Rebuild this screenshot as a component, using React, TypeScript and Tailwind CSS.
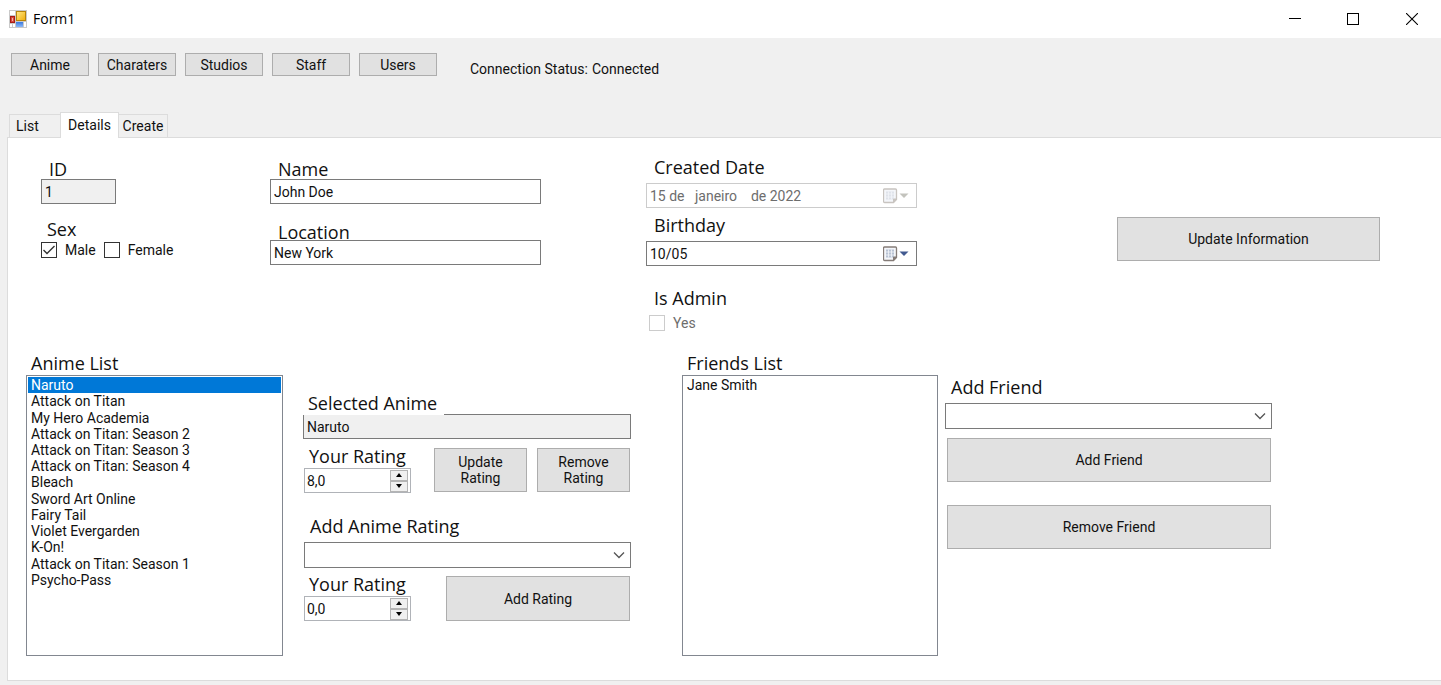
import { useId, useState, type ReactNode } from "react";

const sections = ["Anime", "Charaters", "Studios", "Staff", "Users"];

const animeTitles = [
  "Naruto",
  "Attack on Titan",
  "My Hero Academia",
  "Attack on Titan: Season 2",
  "Attack on Titan: Season 3",
  "Attack on Titan: Season 4",
  "Bleach",
  "Sword Art Online",
  "Fairy Tail",
  "Violet Evergarden",
  "K-On!",
  "Attack on Titan: Season 1",
  "Psycho-Pass",
];

const captionClass =
  "block text-[18px] leading-5 whitespace-nowrap text-[#111] font-['Open_Sans','Noto_Sans',sans-serif]";

function FormIcon() {
  return (
    <svg width="18" height="18" viewBox="0 0 18 18" aria-hidden="true">
      <defs>
        <linearGradient id="gold" x1="0" y1="0" x2="1" y2="1">
          <stop offset="0" stopColor="#ffe680" />
          <stop offset="1" stopColor="#f0b010" />
        </linearGradient>
        <linearGradient id="sky" x1="0" y1="0" x2="0" y2="1">
          <stop offset="0" stopColor="#3a78dc" />
          <stop offset="1" stopColor="#8ab8fa" />
        </linearGradient>
      </defs>
      <rect width="18" height="18" fill="#c9c9c9" />
      <rect x="1" y="1" width="5" height="4" fill="#fff" />
      <rect x="1" y="14" width="2" height="3" fill="#fff" />
      <rect x="4" y="14" width="2" height="3" fill="#fff" />
      <rect x="15" y="12" width="2" height="5" fill="#fff" />
      <rect x="1" y="6" width="5" height="7" fill="#a81c14" />
      <rect x="2" y="7" width="3" height="5" fill="#d8483c" />
      <rect x="3" y="8" width="1" height="3" fill="#f4b0a8" />
      <rect x="7" y="1" width="10" height="10" fill="#b88408" />
      <rect x="8" y="2" width="8" height="8" fill="url(#gold)" />
      <rect x="7" y="12" width="7" height="5" fill="url(#sky)" />
    </svg>
  );
}

function CalendarIcon({ muted }: { muted?: boolean }) {
  const frame = muted ? "#c8c4c0" : "#857c78";
  const grid = muted ? "#dfe3ea" : "#b9c3d4";
  return (
    <svg width="26" height="16" viewBox="0 0 26 16" aria-hidden="true">
      <path d="M1.5 1H12.5Q13.5 1 13.5 2V11.5L10.5 14.5H1.5Q.5 14.5 .5 13.5V2Q.5 1 1.5 1Z" fill="#f4f6fa" stroke={frame} strokeWidth="1.3" />
      <path d="M3 3.5H11V11.5H3Z" fill={grid} />
      <path d="M3 6H11M3 9H11M5.5 3.5V11.5M8.5 3.5V11.5" stroke="#f2f5fa" strokeWidth=".8" />
      <path d="M13.5 11H10.5V14.5Z" fill={frame} stroke={frame} />
      <path d="M16.5 5.5H25.5L21 10Z" fill={muted ? "#c3c3bd" : "#425a90"} />
    </svg>
  );
}

function Field({ label, value, disabled, overlap, width = "w-full" }: { label: string; value: string; disabled?: boolean; overlap?: boolean; width?: string }) {
  const id = useId();
  return (
    <div>
      <label htmlFor={id} className={`${captionClass} pl-2 ${overlap ? "-mb-0.5 pt-0.5" : ""}`}>
        {label}
      </label>
      <input
        id={id}
        defaultValue={value}
        readOnly={disabled}
        className={`h-[25px] border border-[#7a7a7a] px-[3px] ${width} ${disabled ? "bg-[#f0f0f0]" : "bg-white"}`}
      />
    </div>
  );
}

function DateField({ label, value, disabled }: { label: string; value: string; disabled?: boolean }) {
  const id = useId();
  return (
    <div>
      <label htmlFor={id} className={`${captionClass} mb-1.5 pl-2`}>
        {label}
      </label>
      <div className={`flex h-[25px] items-center border pr-[7px] ${disabled ? "border-[#cccccc] text-[#6d6d6d]" : "border-[#7a7a7a]"}`}>
        <input id={id} defaultValue={value} disabled={disabled} className="min-w-0 flex-1 bg-transparent pl-[3px]" />
        <button type="button" disabled={disabled} aria-label={`Pick ${label}`}>
          <CalendarIcon muted={disabled} />
        </button>
      </div>
    </div>
  );
}

function TickBox({ label, checked, disabled }: { label: string; checked?: boolean; disabled?: boolean }) {
  return (
    <label className={`flex items-center gap-2 ${disabled ? "text-[#6d6d6d]" : ""}`}>
      <span className="grid size-4">
        <input
          type="checkbox"
          defaultChecked={checked}
          disabled={disabled}
          className={`peer col-start-1 row-start-1 size-4 appearance-none border bg-white ${disabled ? "border-[#cccccc]" : "border-[#333]"}`}
        />
        <svg viewBox="0 0 16 16" className="pointer-events-none invisible col-start-1 row-start-1 size-4 peer-checked:visible" aria-hidden="true">
          <path d="M2.5 8L6 11.5L13.5 4" fill="none" stroke="#333" strokeWidth="1.4" />
        </svg>
      </span>
      {label}
    </label>
  );
}

function PushButton({ children, className }: { children: ReactNode; className: string }) {
  return (
    <button type="button" className={`border border-[#adadad] bg-[#e1e1e1] leading-4 ${className}`}>
      {children}
    </button>
  );
}

function ComboBox({ label }: { label: string }) {
  const id = useId();
  return (
    <div>
      <label htmlFor={id} className={`${captionClass} mb-1.5 pl-1.5`}>
        {label}
      </label>
      <div className="grid items-center">
        <select id={id} className="col-start-1 row-start-1 h-[26px] w-full appearance-none border border-[#7a7a7a] bg-white px-1" />
        <svg width="12" height="8" viewBox="0 0 12 8" className="pointer-events-none col-start-1 row-start-1 mr-1.5 justify-self-end" aria-hidden="true">
          <path d="M1 1.5L6 6.5L11 1.5" fill="none" stroke="#555" strokeWidth="1.3" />
        </svg>
      </div>
    </div>
  );
}

function RatingField({ initial }: { initial: number }) {
  const id = useId();
  const [value, setValue] = useState(initial);
  const stepClass = "grid h-[11px] place-items-center border border-[#b4b4b4] bg-[#f0f0f0]";
  return (
    <div className="w-[107px]">
      <label htmlFor={id} className={`${captionClass} mb-0.5 pl-[5px]`}>
        Your Rating
      </label>
      <div className="flex h-[25px] items-center border border-[#b0b3b8] pr-0.5">
        <input id={id} readOnly value={value.toFixed(1).replace(".", ",")} className="min-w-0 flex-1 pl-0.5" />
        <div className="flex w-[18px] flex-col">
          <button type="button" aria-label="Increase rating" className={stepClass} onClick={() => setValue(Math.min(10, value + 0.5))}>
            <svg width="8" height="4" viewBox="0 0 8 4" aria-hidden="true">
              <path d="M4 0L7 4H1Z" fill="#000" />
            </svg>
          </button>
          <button type="button" aria-label="Decrease rating" className={stepClass} onClick={() => setValue(Math.max(0, value - 0.5))}>
            <svg width="8" height="4" viewBox="0 0 8 4" aria-hidden="true">
              <path d="M1 0H7L4 4Z" fill="#000" />
            </svg>
          </button>
        </div>
      </div>
    </div>
  );
}

function ListBox({ label, items, selected }: { label: string; items: string[]; selected?: string }) {
  const id = useId();
  return (
    <div>
      <h2 id={id} className={`${captionClass} mb-0.5 pl-[5px]`}>
        {label}
      </h2>
      <div className="h-[281px] border border-[#828790] p-px">
        <ul role="listbox" aria-labelledby={id} className={`grid auto-rows-fr ${items.length > 1 ? "h-[211px]" : ""}`}>
          {items.map((item) => (
            <li
              key={item}
              role="option"
              aria-selected={item === selected}
              className={`flex items-center pl-[3px] leading-4 ${item === selected ? "bg-[#0078d7] text-white" : ""}`}
            >
              {item}
            </li>
          ))}
        </ul>
      </div>
    </div>
  );
}

export default function App() {
  return (
    <div className="flex min-h-screen flex-col bg-[#f0f0f0] pb-1 font-[Roboto,'Liberation_Sans',sans-serif] text-[14px] leading-4 text-[#111]">
      <header className="flex h-[38px] items-center bg-white pl-[9px]">
        <FormIcon />
        <h1 className="flex-1 pl-1.5 font-['Open_Sans','Noto_Sans',sans-serif] text-[14px] text-black">Form1</h1>
        <button type="button" aria-label="Minimize" className="grid h-full w-[58px] place-items-center">
          <svg width="12" height="12" viewBox="0 0 12 12" shapeRendering="crispEdges" aria-hidden="true">
            <path d="M0 5.5H12" stroke="#000" />
          </svg>
        </button>
        <button type="button" aria-label="Maximize" className="grid h-full w-[58px] place-items-center">
          <svg width="12" height="12" viewBox="0 0 12 12" shapeRendering="crispEdges" aria-hidden="true">
            <path d="M.5 .5H11.5V11.5H.5Z" fill="none" stroke="#000" />
          </svg>
        </button>
        <button type="button" aria-label="Close" className="grid h-full w-[59px] place-items-center">
          <svg width="12" height="12" viewBox="0 0 12 12" aria-hidden="true">
            <path d="M0 0L12 12M12 0L0 12" stroke="#000" strokeWidth="1.1" />
          </svg>
        </button>
      </header>

      <nav className="flex h-[74px] items-start gap-[9px] pt-[15px] pl-[11px]">
        {sections.map((name) => (
          <PushButton key={name} className="h-[23px] w-[78px]">
            {name}
          </PushButton>
        ))}
        <p className="flex gap-1 pt-2 pl-6">
          <span>Connection Status:</span>
          <span>Connected</span>
        </p>
      </nav>

      <main className="flex flex-1 flex-col pl-[7px]">
        <div role="tablist" className="z-10 -mb-px flex items-end pl-0.5">
          <button type="button" role="tab" aria-selected="false" className="h-6 w-[51px] border border-r-0 border-[#dcdcdc] pl-1.5 text-left">
            List
          </button>
          <button type="button" role="tab" aria-selected="true" className="h-[26px] w-[59px] border border-b-0 border-[#dcdcdc] bg-white pb-0.5">
            Details
          </button>
          <button type="button" role="tab" aria-selected="false" className="h-6 w-[49px] border border-l-0 border-[#dcdcdc]">
            Create
          </button>
        </div>

        <div role="tabpanel" className="flex-1 border border-r-0 border-[#dcdcdc] bg-white pb-[22px]">
          <section className="grid grid-cols-[229fr_376fr_471fr_263fr] pt-[21px] pr-[61px] pl-[33px]">
            <div>
              <Field label="ID" value="1" disabled width="w-[75px]" />
              <fieldset className="mt-[15px]">
                <legend className={`${captionClass} pl-1.5`}>Sex</legend>
                <div className="flex gap-2 pt-[3px]">
                  <TickBox label="Male" checked />
                  <TickBox label="Female" />
                </div>
              </fieldset>
            </div>
            <div className="flex flex-col gap-4 pr-[105px]">
              <Field label="Name" value="John Doe" />
              <Field label="Location" value="New York" overlap />
            </div>
            <div className="-mt-0.5 flex flex-col gap-[7px] pr-[200px]">
              <DateField label="Created Date" value="15 de   janeiro    de 2022" disabled />
              <DateField label="Birthday" value="10/05" />
              <div className="flex flex-col gap-[7px] pt-[15px] pl-[3px]">
                <h2 className={`${captionClass} pl-[5px]`}>Is Admin</h2>
                <TickBox label="Yes" disabled />
              </div>
            </div>
            <PushButton className="mt-[58px] h-11 w-full">Update Information</PushButton>
          </section>

          <section className="grid grid-cols-[277fr_379fr_263fr_327fr] pt-[22px] pr-[169px] pl-[18px]">
            <div className="pr-5">
              <ListBox label="Anime List" items={animeTitles} selected="Naruto" />
            </div>

            <div className="pt-10 pr-[51px]">
              <label htmlFor="selected-anime" className={`${captionClass} relative -mb-px h-[22px] w-[141px] bg-white pl-[5px]`}>
                Selected Anime
              </label>
              <input id="selected-anime" readOnly value="Naruto" className="h-[25px] w-full border border-[#7a7a7a] bg-[#f0f0f0] px-[3px]" />
              <div className="flex items-end justify-between px-px pt-[7px]">
                <RatingField initial={8} />
                <div className="flex gap-2.5 pb-px">
                  <PushButton className="h-11 w-[93px] px-4">Update Rating</PushButton>
                  <PushButton className="h-11 w-[93px] px-4">Remove Rating</PushButton>
                </div>
              </div>
              <div className="pt-[23px] pl-px">
                <ComboBox label="Add Anime Rating" />
              </div>
              <div className="flex items-end justify-between px-px pt-1.5">
                <RatingField initial={0} />
                <PushButton className="h-[45px] w-[184px]">Add Rating</PushButton>
              </div>
            </div>

            <div className="pr-[7px]">
              <ListBox label="Friends List" items={["Jane Smith"]} />
            </div>

            <div className="pt-6">
              <ComboBox label="Add Friend" />
              <div className="flex flex-col gap-[23px] pt-[9px] pr-px pl-0.5">
                <PushButton className="h-11 w-full">Add Friend</PushButton>
                <PushButton className="h-11 w-full">Remove Friend</PushButton>
              </div>
            </div>
          </section>
        </div>
      </main>
    </div>
  );
}
